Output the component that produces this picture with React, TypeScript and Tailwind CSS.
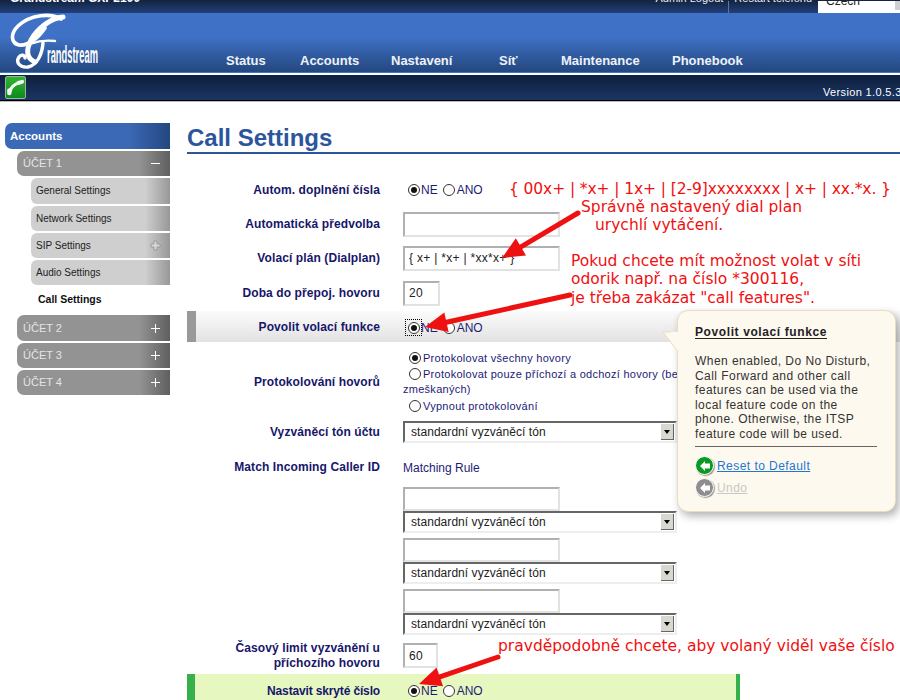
const sans = "font-['Liberation_Sans',Arial,sans-serif]";
const dejavu = "font-['DejaVu_Sans',sans-serif]";

function Logo() {
  return (
    <div className="relative w-[100px] h-[58px] shrink-0">
      <svg viewBox="0 0 100 58" className="absolute inset-0 w-full h-full" fill="none" stroke="#fff" strokeLinecap="round">
        <path d="M56 6 C46 0 26 1 13 13 C5 21 6 30 14 32 C22 33 32 27 40 15" strokeWidth="3.6" />
        <path d="M58 4 C46 5 33 15 26 27 C21 37 21 45 30 49" strokeWidth="5" />
        <path d="M25 31 C33 28 42 27 50 28" strokeWidth="2.4" />
        <path d="M38 30 C37 42 32 52 23 54 C16 55 10 50 14 44 C16 41 20 42 20 45" strokeWidth="3.4" />
      </svg>
      <span
        className={`absolute left-[42px] top-[30px] text-white font-bold text-[24px] leading-[24px] whitespace-nowrap origin-left scale-x-[0.39] ${sans}`}
      >
        randstream
      </span>
    </div>
  );
}

function PhoneButton() {
  return (
    <div className="w-[22px] h-[23px] rounded-[2px] border border-[#9fb3a0] bg-gradient-to-b from-[#2fb52f] to-[#0b8a1e] flex items-center justify-center">
      <svg viewBox="0 0 20 20" className="w-[19px] h-[19px]" fill="none" stroke="#f4f8f4" strokeLinecap="round">
        <path d="M15 5 C9 6 5 10 4 15" strokeWidth="3" />
        <path d="M13 5 L17 4" strokeWidth="4" />
        <path d="M3.5 13 L3.5 16" strokeWidth="4.5" />
      </svg>
    </div>
  );
}

function Header() {
  return (
    <header className={sans}>
      <div className="h-[13px] overflow-hidden bg-gradient-to-b from-[#13233f] to-[#21407a] flex items-end text-white text-[12px] leading-[14px]">
        <span className="ml-[10px] pb-[8px] font-bold whitespace-nowrap">Grandstream GXP2100</span>
        <span className="ml-auto pb-[8px] text-[11px] text-[#e8edf5] whitespace-nowrap">Admin Logout</span>
        <span className="w-px h-[12px] bg-[#5d77a3] mx-[5px]" />
        <span className="pb-[8px] text-[11px] text-[#e8edf5] whitespace-nowrap">Restart telefonu</span>
        <div className="ml-[6px] w-[82px] h-[12px] bg-white pl-[8px] flex items-end text-[#222]">
          <span className="pb-[5px]">Czech</span>
          <span className="ml-auto w-[5px] h-[9px] bg-[#d0d0d0] self-start" />
        </div>
      </div>
      <div className="h-[60px] bg-gradient-to-b from-[#3f72c6] from-40% to-[#24477f] border-b border-[#3a78d6] flex items-end">
        <div className="ml-[5px] mb-[1px]">
          <Logo />
        </div>
        <nav className="ml-[121px] mb-[3px] flex font-bold text-[13px] leading-[16px] text-[#eef2f8]">
          <span className="w-[74px]">Status</span>
          <span className="w-[91px]">Accounts</span>
          <span className="w-[108px]">Nastavení</span>
          <span className="w-[62px]">Síť</span>
          <span className="w-[111px]">Maintenance</span>
          <span>Phonebook</span>
        </nav>
      </div>
      <div className="h-[2px] bg-white" />
      <div className="h-[26px] bg-gradient-to-b from-[#0f1f3d] to-[#1b3563] border-b border-black flex items-center pl-[5px]">
        <PhoneButton />
        <span className="ml-[797px] pt-[9px] text-[11px] text-white tracking-[0.35px] whitespace-nowrap">Version 1.0.5.32</span>
      </div>
      <div className="h-px bg-[#bbb]" />
    </header>
  );
}

function SideItem({ label, sign, sub }: { label: string; sign?: "+" | "-" | "o"; sub?: boolean }) {
  if (sub) {
    return (
      <div className="ml-[26px] h-[25.3px] mt-[2px] rounded-l-[6px] bg-[linear-gradient(to_right,#cfcfcf_82%,#989898)] flex items-center pl-[5px] pr-[9px] text-[10px] text-[#222]">
        <span>{label}</span>
        {sign === "o" && (
          <svg viewBox="0 0 11 11" className="ml-auto w-[11px] h-[11px]">
            <path d="M4 1h3v3h3v3H7v3H4V7H1V4h3z" fill="#d4d4d4" stroke="#8c8c8c" strokeWidth="0.7" />
          </svg>
        )}
      </div>
    );
  }
  return (
    <div className="ml-[12px] h-[25.3px] mt-[2px] rounded-l-[7px] bg-[linear-gradient(to_right,#939393_80%,#5f5f5f)] flex items-center pl-[6px] pr-[10px] text-[11px] text-[#e4e4e4]">
      <span>{label}</span>
      <span className="ml-auto relative w-[9px] h-[9px]">
        <span className="absolute left-0 right-0 top-[4px] h-px bg-white" />
        {sign === "+" && <span className="absolute top-0 bottom-0 left-[4px] w-px bg-white" />}
      </span>
    </div>
  );
}

function Sidebar() {
  return (
    <aside className={`w-[165px] shrink-0 ${sans}`}>
      <div className="h-[26px] pt-px rounded-l-[7px] bg-[linear-gradient(to_right,#3b69b6_75%,#23477f)] flex items-center pl-[5px] text-white font-bold text-[11.5px]">
        Accounts
      </div>
      <SideItem label="ÚČET 1" sign="-" />
      <SideItem label="General Settings" sub />
      <SideItem label="Network Settings" sub />
      <SideItem label="SIP Settings" sign="o" sub />
      <SideItem label="Audio Settings" sub />
      <div className="ml-[33px] h-[28px] flex items-center text-[10.5px] font-bold text-[#111]">Call Settings</div>
      <SideItem label="ÚČET 2" sign="+" />
      <SideItem label="ÚČET 3" sign="+" />
      <SideItem label="ÚČET 4" sign="+" />
    </aside>
  );
}

function Radio({ on, focus }: { on?: boolean; focus?: boolean }) {
  return (
    <span className={`inline-flex items-center justify-center w-[13px] h-[13px] shrink-0 ${focus ? "outline-1 outline-dotted outline-black outline-offset-[1px]" : ""}`}>
      <span className="w-[12px] h-[12px] rounded-full border border-[#333] bg-white flex items-center justify-center">
        {on && <span className="w-[6px] h-[6px] rounded-full bg-[#111]" />}
      </span>
    </span>
  );
}

function YesNo({ focus }: { focus?: boolean }) {
  return (
    <div className="flex items-center pl-[4px] text-[12px] text-[#1c1c74]">
      <Radio on focus={focus} />
      <span className="ml-px mr-[5px]">NE</span>
      <Radio />
      <span className="ml-px">ANO</span>
    </div>
  );
}

function TextBox({ value, w, h = "h-[25px]" }: { value?: string; w: string; h?: string }) {
  return (
    <input
      readOnly
      defaultValue={value}
      className={`${w} ${h} block border-2 border-t-[#b0b0b0] border-l-[#b0b0b0] border-r-[#e2e2e2] border-b-[#e2e2e2] bg-white pl-[4px] text-[12px] text-[#222] tracking-[0.3px] outline-none ${sans}`}
    />
  );
}

function Ringtone() {
  return (
    <div className="w-[274px] h-[22px] border-2 border-t-[#666] border-l-[#666] border-r-[#eee] border-b-[#eee] bg-white flex items-center pl-[6px] text-[12px] text-[#222] tracking-[0.05px]">
      <span>standardní vyzváněcí tón</span>
      <span className="ml-auto mr-px w-[13px] h-[16px] bg-[#d8d8d0] border-r border-b border-[#666] flex items-center justify-center">
        <span className="border-x-[3px] border-x-transparent border-t-[4px] border-t-black" />
      </span>
    </div>
  );
}

function Row({ label, h, children }: { label: React.ReactNode; h: string; children?: React.ReactNode }) {
  return (
    <div className={`${h} flex items-center`}>
      <div className="w-[193px] text-right font-bold text-[12px] leading-[15px] tracking-[0.1px] text-[#16166a]">{label}</div>
      <div className="ml-[23px]">{children}</div>
    </div>
  );
}

function Form() {
  return (
    <div className="mt-[19px]">
      <Row label="Autom. doplnění čísla" h="h-[34px]">
        <YesNo />
      </Row>
      <Row label="Automatická předvolba" h="h-[34px]">
        <TextBox w="w-[157px]" />
      </Row>
      <Row label="Volací plán (Dialplan)" h="h-[34px]">
        <TextBox w="w-[157px]" value="{ x+ | *x+ | *xx*x+ }" />
      </Row>
      <Row label="Doba do přepoj. hovoru" h="h-[36px]">
        <TextBox w="w-[37px]" value="20" />
      </Row>
      <div className="h-[31px] flex items-center bg-[linear-gradient(to_bottom,#fbfbfb,#e2e2e2)]">
        <div className="w-[9px] h-full bg-[#999] shrink-0" />
        <div className="w-[184px] text-right font-bold text-[12px] tracking-[0.1px] text-[#16166a]">Povolit volací funkce</div>
        <div className="ml-[23px] pt-[2px]">
          <YesNo focus />
        </div>
      </div>
      <div className="h-[73px] pt-[6px] flex items-center">
        <div className="w-[193px] text-right font-bold text-[12px] tracking-[0.1px] text-[#16166a]">Protokolování hovorů</div>
        <div className="ml-[23px] w-[274px] text-[11px] leading-[14px] tracking-[0.27px] text-[#1c1c74]">
          <div className="flex items-center pl-[5px] h-[17px]">
            <Radio on />
            <span className="ml-[2px]">Protokolovat všechny hovory</span>
          </div>
          <div className="pl-[5px] flex items-center h-[16px] whitespace-nowrap">
            <Radio />
            <span className="ml-[2px]">Protokolovat pouze příchozí a odchozí hovory (bez</span>
          </div>
          <div className="h-[15px]">zmeškaných)</div>
          <div className="flex items-center pl-[5px] h-[17px]">
            <Radio />
            <span className="ml-[2px]">Vypnout protokolování</span>
          </div>
        </div>
      </div>
      <Row label="Vyzváněcí tón účtu" h="h-[34px]">
        <Ringtone />
      </Row>
      <Row label="Match Incoming Caller ID" h="h-[36px]">
        <span className="text-[12px] text-[#1c1c74]">Matching Rule</span>
      </Row>
      <div className="ml-[216px] mt-[2px] flex flex-col">
        <TextBox w="w-[157px]" h="h-[24px]" />
        <Ringtone />
        <div className="h-[5px]" />
        <TextBox w="w-[157px]" h="h-[24px]" />
        <Ringtone />
        <div className="h-[5px]" />
        <TextBox w="w-[157px]" h="h-[24px]" />
        <Ringtone />
      </div>
      <Row
        label={
          <>
            Časový limit vyzvánění u
            <br />
            příchozího hovoru
          </>
        }
        h="h-[37px] mt-[2px]"
      >
        <TextBox w="w-[35px]" value="60" />
      </Row>
      <div className="w-[553px] h-[40px] flex bg-[#e6f7c0] border-r-4 border-[#35b04a]">
        <div className="w-[8px] bg-[#35b04a] shrink-0" />
        <div className="w-[185px] pt-[8px] text-right font-bold text-[12px] tracking-[-0.15px] text-[#16166a]">Nastavit skryté číslo</div>
        <div className="ml-[23px] pt-[8px]">
          <YesNo />
        </div>
      </div>
    </div>
  );
}

function RoundArrow({ color }: { color: string }) {
  return (
    <span className={`w-[19px] h-[19px] rounded-full ${color} border border-white shadow-[1px_1px_1px_#999] flex items-center justify-center shrink-0`}>
      <svg viewBox="0 0 12 12" className="w-[12px] h-[12px]">
        <path d="M1 6 L6 1 V3.5 H11 V8.5 H6 V11 Z" fill="#fff" />
      </svg>
    </span>
  );
}

function Tooltip() {
  return (
    <div className={`absolute left-[677px] top-[310px] w-[219px] h-[202px] rounded-[11px] border border-[#e9dcc0] bg-[#fdf9ef] shadow-[3px_4px_8px_rgba(0,0,0,0.3)] pl-[17px] pr-[18px] pt-[13px] text-[12px] text-[#333] tracking-[0.45px] ${sans}`}>
      <svg viewBox="0 0 16 24" className="absolute left-[-15px] top-[20px] w-[16px] h-[24px]">
        <path d="M0 1 H14 L16 0 V23 L14 20 Z" fill="#fdf9ef" />
        <path d="M0 1 H8 M0 1 L15 21" stroke="#e9dcc0" fill="none" />
      </svg>
      <div className="font-bold text-[#222] underline underline-offset-2 leading-[16px] tracking-[0.6px]">Povolit volací funkce</div>
      <p className="mt-[14px] leading-[14.6px] whitespace-nowrap">
        When enabled, Do No Disturb,
        <br />
        Call Forward and other call
        <br />
        features can be used via the
        <br />
        local feature code on the
        <br />
        phone. Otherwise, the ITSP
        <br />
        feature code will be used.
      </p>
      <div className="mt-[4px] h-px bg-[#666]" />
      <div className="mt-[9px] flex items-center h-[20px] text-[#1e77d2]">
        <RoundArrow color="bg-[#0a9a22]" />
        <span className="underline ml-[3px]">Reset to Default</span>
      </div>
      <div className="mt-[2px] flex items-center h-[20px] text-[#c8c8c8]">
        <RoundArrow color="bg-[#8e8e8e]" />
        <span className="underline ml-[3px]">Undo</span>
      </div>
    </div>
  );
}

function Note({ x, y, children }: { x: string; y: string; children: React.ReactNode }) {
  return <div className={`absolute ${x} ${y} text-[15.5px] leading-[18px] text-[#f01010] whitespace-nowrap ${dejavu}`}>{children}</div>;
}

function Arrow({ x1, y1, x2, y2 }: { x1: number; y1: number; x2: number; y2: number }) {
  const a = Math.atan2(y2 - y1, x2 - x1);
  const bx = x2 - Math.cos(a) * 22;
  const by = y2 - Math.sin(a) * 22;
  const nx = -Math.sin(a) * 10;
  const ny = Math.cos(a) * 10;
  return (
    <g>
      <line x1={x1} y1={y1} x2={bx} y2={by} stroke="#ee1111" strokeWidth="5" strokeLinecap="round" />
      <path d={`M${x2} ${y2} L${bx + nx} ${by + ny} L${bx - nx} ${by - ny} Z`} fill="#ee1111" />
    </g>
  );
}

function Annotations() {
  return (
    <>
      <svg className="absolute left-0 top-0 w-[900px] h-[700px] pointer-events-none">
        <Arrow x1={578} y1={213} x2={502} y2={258} />
        <Arrow x1={570} y1={295} x2={425} y2={327} />
        <Arrow x1={498} y1={657} x2={419} y2={684} />
      </svg>
      <Note x="left-[509px]" y="top-[180px]">
        <span className="tracking-[-0.1px]">{"{ 00x+ | *x+ | 1x+ | [2-9]xxxxxxxx | x+ | xx.*x. }"}</span>
      </Note>
      <Note x="left-[581px]" y="top-[198px]">Správně nastavený dial plan</Note>
      <Note x="left-[595px]" y="top-[216px]">urychlí vytáčení.</Note>
      <Note x="left-[571px]" y="top-[252px]">Pokud chcete mít možnost volat v síti</Note>
      <Note x="left-[571px]" y="top-[270px]">odorik např. na číslo *300116,</Note>
      <Note x="left-[571px]" y="top-[289px]">je třeba zakázat "call features".</Note>
      <Note x="left-[498px]" y="top-[637px]">pravděpodobně chcete, aby volaný viděl vaše číslo</Note>
    </>
  );
}

export default function App() {
  return (
    <div className={`relative w-[900px] h-[700px] overflow-hidden bg-white ${sans}`}>
      <Header />
      <div className="flex pl-[5px] pt-[21px]">
        <Sidebar />
        <main className="ml-[17px] flex-1 min-w-0">
          <h1 className="h-[28px] mt-px border-b-2 border-[#2b559c] text-[24px] leading-[27px] font-bold text-[#2b559c] box-content">
            Call Settings
          </h1>
          <Form />
        </main>
      </div>
      <Tooltip />
      <Annotations />
    </div>
  );
}
